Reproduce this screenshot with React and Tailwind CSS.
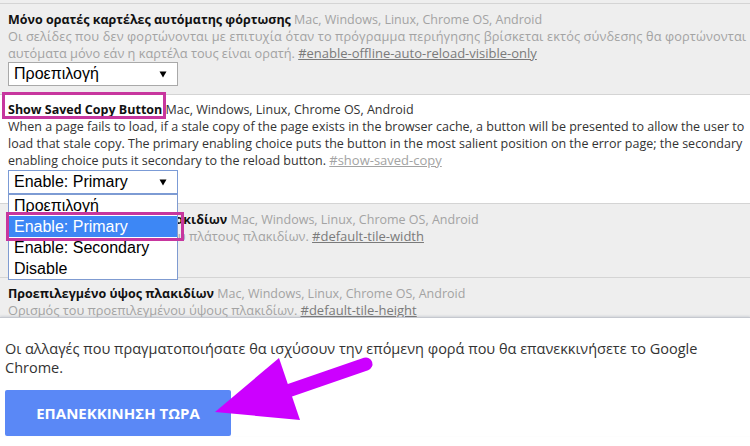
import React from "react";

function Arrow() {
  return (
    <svg width="8" height="7" viewBox="0 0 8 7" className="block">
      <polygon points="0.5,0.5 7.5,0.5 4,6.5" fill="#000" />
    </svg>
  );
}

function Select({ value, focused, children }) {
  return (
    <div className="relative w-[170px]">
      <div
        className={
          "flex h-[24px] w-[170px] items-center justify-between border bg-white pl-[5px] pr-[10px] font-['Liberation_Sans',Arial,sans-serif] text-[16px] leading-none text-black " +
          (focused ? "border-[#7b9bd6]" : "border-[#a9a9a9]")
        }
      >
        <span>{value}</span>
        <Arrow />
      </div>
      {children}
    </div>
  );
}

function Row({ white, pt = "pt-[7px]", pb = "pb-[8px]", children }) {
  return (
    <div
      className={
        "border-t border-[#d4d4d4] px-[8px] " +
        pt +
        " " +
        pb +
        " " +
        (white ? "bg-white" : "bg-[#eeeeee]")
      }
    >
      {children}
    </div>
  );
}

const PLAT = "Mac, Windows, Linux, Chrome OS, Android";
const GR = "text-[12.75px]";
const GRB = "text-[12.5px]";
const LNK = "text-[13px] underline";

export default function App() {
  return (
    <div className="relative h-[446px] w-[750px] overflow-hidden bg-white font-['Open_Sans',sans-serif] text-[12.5px] leading-[17px]">
      <div className="h-[317px] overflow-hidden bg-[#eeeeee] pt-[3px]">
        <Row>
          <div className="h-[17px] whitespace-nowrap">
            <span className={"font-bold text-[#111] " + GRB}>Μόνο ορατές καρτέλες αυτόματης φόρτωσης</span>{" "}
            <span className="text-[#a3a3a3]">{PLAT}</span>
          </div>
          <div className={"h-[17px] whitespace-nowrap text-[#a3a3a3] tracking-[0.12px] " + GR}>
            Οι σελίδες που δεν φορτώνονται με επιτυχία όταν το πρόγραμμα περιήγησης βρίσκεται εκτός σύνδεσης θα φορτώνονται
          </div>
          <div className="h-[17px] whitespace-nowrap text-[#a3a3a3]">
            <span className={GR}>αυτόματα μόνο εάν η καρτέλα τους είναι ορατή.</span>{" "}
            <span className={"text-[#7a7a7a] " + LNK}>#enable-offline-auto-reload-visible-only</span>
          </div>
          <Select value="Προεπιλογή" />
        </Row>

        <Row white pt="pt-[6px]" pb="pb-[9px]">
          <div className="h-[17px] whitespace-nowrap">
            <span className="relative font-bold text-[#111]">
              Show Saved Copy Button
              <span className="pointer-events-none absolute -left-[6px] -right-[4px] -top-[9px] -bottom-[1px] border-[3px] border-[#c7369e]" />
            </span>{" "}
            <span className="text-[#333]">{PLAT}</span>
          </div>
          <div className="h-[17px] whitespace-nowrap text-[#333]">
            When a page fails to load, if a stale copy of the page exists in the browser cache, a button will be presented to allow the user to
          </div>
          <div className="h-[17px] whitespace-nowrap text-[#333]">
            load that stale copy. The primary enabling choice puts the button in the most salient position on the error page; the secondary
          </div>
          <div className="h-[17px] whitespace-nowrap text-[#333]">
            enabling choice puts it secondary to the reload button.{" "}
            <span className={"text-[#a3a3a3] " + LNK}>#show-saved-copy</span>
          </div>
          <div className="mt-px">
            <Select value="Enable: Primary" focused>
              <div className="absolute left-0 top-full z-10 w-[170px] border border-[#7f9bd1] bg-white font-['Liberation_Sans',Arial,sans-serif] text-[16px] leading-none text-black">
                <div className="flex h-[21px] items-center pl-[5px]">Προεπιλογή</div>
                <div className="relative flex h-[21px] items-center bg-[#3d87f5] pl-[5px] text-white">
                  Enable: Primary
                  <span className="pointer-events-none absolute -left-[3px] -right-[7px] -top-[4px] -bottom-[4px] border-[3px] border-[#c7369e]" />
                </div>
                <div className="flex h-[21px] items-center pl-[5px]">Enable: Secondary</div>
                <div className="flex h-[21px] items-center pl-[5px]">Disable</div>
              </div>
            </Select>
          </div>
        </Row>

        <Row>
          <div className="h-[17px] whitespace-nowrap">
            <span className={"font-bold text-[#111] " + GRB}>Προεπιλεγμένο πλάτος πλακιδίων</span>{" "}
            <span className="text-[#a3a3a3]">{PLAT}</span>
          </div>
          <div className="h-[17px] whitespace-nowrap text-[#a3a3a3]">
            <span className={GR}>Ορισμός του προεπιλεγμένου πλάτους πλακιδίων.</span>{" "}
            <span className={"text-[#7a7a7a] " + LNK}>#default-tile-width</span>
          </div>
          <Select value="Προεπιλογή" />
        </Row>

        <Row>
          <div className="h-[17px] whitespace-nowrap">
            <span className={"font-bold text-[#111] " + GRB}>Προεπιλεγμένο ύψος πλακιδίων</span>{" "}
            <span className="text-[#a3a3a3]">{PLAT}</span>
          </div>
          <div className="h-[17px] whitespace-nowrap text-[#a3a3a3]">
            <span className={GR}>Ορισμός του προεπιλεγμένου ύψους πλακιδίων.</span>{" "}
            <span className={"text-[#7a7a7a] " + LNK}>#default-tile-height</span>
          </div>
          <Select value="Προεπιλογή" />
        </Row>
      </div>

      <div className="border-t border-[#c5c8cf] bg-white px-[5px] pt-[21px] shadow-[0_-1px_2px_rgba(120,130,150,0.25)]">
        <p className="whitespace-nowrap text-[14.5px] leading-[19px] text-[#333]">
          Οι αλλαγές που πραγματοποιήσατε θα ισχύσουν την επόμενη φορά που θα επανεκκινήσετε το Google
          <br />
          Chrome.
        </p>
        <button className="mt-[13px] flex h-[46px] w-[226px] items-center justify-center rounded-[2px] bg-[#5a88f6] text-[15px] font-bold text-white">
          ΕΠΑΝΕΚΚΙΝΗΣΗ ΤΩΡΑ
        </button>
      </div>

      <svg
        className="pointer-events-none absolute left-0 top-0"
        width="750"
        height="446"
        viewBox="0 0 750 446"
      >
        <line x1="366" y1="364" x2="282" y2="393" stroke="#cc00ff" strokeWidth="13" strokeLinecap="round" />
        <polygon points="215,412 279,358 300,420" fill="#cc00ff" />
      </svg>
    </div>
  );
}
